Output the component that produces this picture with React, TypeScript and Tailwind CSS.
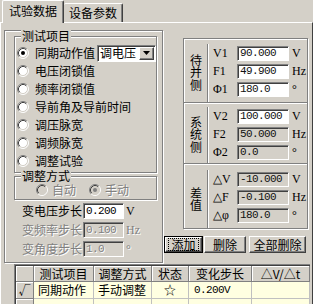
import React from 'react';

const etched = 'border border-[#808080] shadow-[inset_1px_1px_0_#ffffff,1px_1px_0_#ffffff]';
const sunken =
  'border border-t-[#808080] border-l-[#808080] border-b-white border-r-white shadow-[inset_1px_1px_0_#404040]';
const raised =
  'border border-t-white border-l-white border-b-[#404040] border-r-[#404040] shadow-[inset_-1px_-1px_0_#808080]';
const mono = "font-['Liberation_Mono',monospace] text-[11px] tracking-[-0.6px]";
const serif = "font-['Liberation_Serif',serif]";
const grayText = 'text-[#808080] [text-shadow:1px_1px_0_#ffffff]';

function Radio({ checked = false, disabled = false }: { checked?: boolean; disabled?: boolean }) {
  return (
    <svg width="12" height="12" viewBox="0 0 12 12" className="shrink-0">
      <circle cx="6" cy="6" r="5" fill={disabled ? '#d4d0c8' : '#ffffff'} />
      <path d="M2.11 9.89A5.5 5.5 0 0 1 9.89 2.11" fill="none" stroke="#808080" />
      <path d="M9.89 2.11A5.5 5.5 0 0 1 2.11 9.89" fill="none" stroke="#ffffff" />
      <path d="M2.82 9.18A4.5 4.5 0 0 1 9.18 2.82" fill="none" stroke="#404040" />
      <path d="M9.18 2.82A4.5 4.5 0 0 1 2.82 9.18" fill="none" stroke="#d4d0c8" />
      {checked && <circle cx="6" cy="6" r="2" fill={disabled ? '#808080' : '#000000'} />}
    </svg>
  );
}

const items = ['同期动作值', '电压闭锁值', '频率闭锁值', '导前角及导前时间', '调压脉宽', '调频脉宽', '调整试验'];

function StepRow({ label, value, unit, disabled = false }: { label: string; value: string; unit: string; disabled?: boolean }) {
  return (
    <div className="flex h-[16px] items-center pl-[8px]">
      <span className={`w-[61px] ${disabled ? grayText : ''}`}>{label}</span>
      <div className={`flex h-[16px] w-[41px] items-center pl-[2px] ${sunken} ${disabled ? 'bg-[#d4d0c8]' : 'bg-white'}`}>
        <span className={`${mono} ${disabled ? grayText : ''}`}>{value}</span>
      </div>
      <span className={`ml-[2px] ${serif} ${disabled ? grayText : ''}`}>{unit}</span>
    </div>
  );
}

function LeftPanel() {
  return (
    <div className={`ml-[3px] h-[233px] w-[159px] shrink-0 pl-[9px] pt-[5px] ${etched}`}>
      <div className={`flex h-[137px] w-[143px] flex-col ${etched}`}>
        <div className="-mt-[7px] ml-[6px] w-fit bg-[#d4d0c8] px-[1px] leading-[12px]">测试项目</div>
        <div className="mt-[2px] flex flex-col pl-[2px]">
          {items.map((t, i) => (
            <div key={t} className="flex h-[18px] items-center">
              <Radio checked={i === 0} />
              <span className="ml-[6px]">{t}</span>
              {i === 0 && (
                <div className={`ml-auto flex h-[17px] w-[59px] items-center bg-white pl-[2px] ${sunken}`}>
                  <span>调电压</span>
                  <div className={`ml-auto mr-px flex h-[13px] w-[15px] items-center justify-center bg-[#d4d0c8] ${raised}`}>
                    <svg width="7" height="4" viewBox="0 0 7 4">
                      <path d="M0 0h7L3.5 4z" fill="#000" />
                    </svg>
                  </div>
                </div>
              )}
            </div>
          ))}
        </div>
      </div>
      <div className={`mt-[3px] flex h-[24px] w-[143px] flex-col ${etched}`}>
        <div className="-mt-[7px] ml-[6px] w-fit bg-[#d4d0c8] px-[1px] leading-[12px]">调整方式</div>
        <div className="mt-px flex h-[14px] items-center pl-[21px]">
          <Radio disabled />
          <span className={`ml-[4px] ${grayText}`}>自动</span>
          <span className="ml-[13px]" />
          <Radio disabled checked />
          <span className={`ml-[4px] ${grayText}`}>手动</span>
        </div>
      </div>
      <div className="mt-[3px] flex flex-col gap-[3px]">
        <StepRow label="变电压步长" value="0.200" unit="V" />
        <StepRow label="变频率步长" value="0.100" unit="Hz" disabled />
        <StepRow label="变角度步长" value="1.0" unit="°" disabled />
      </div>
    </div>
  );
}

type Row = { label: string; value: string; unit: string; gray?: boolean };

function Section({ title, rows, className }: { title: string; rows: Row[]; className: string }) {
  return (
    <div className={`flex ${className}`}>
      <div className="flex w-[24px] shrink-0 items-center justify-center border-r border-r-[#808080] shadow-[1px_0_0_#ffffff]">
        <span className="leading-[12px] tracking-[0.5px] [writing-mode:vertical-rl]">{title}</span>
      </div>
      <div className="flex flex-col pl-[5px]">
        {rows.map((r) => (
          <div key={r.label} className="flex h-[18px] items-center">
            <span className={`w-[24px] ${serif}`}>{r.label}</span>
            <div className={`flex h-[15px] w-[52px] items-center pl-[2px] ${sunken} ${r.gray ? 'bg-[#d4d0c8]' : 'bg-white'}`}>
              <span className={`${mono} text-[#101010]`}>{r.value}</span>
            </div>
            <span className={`ml-[3px] ${serif}`}>{r.unit}</span>
          </div>
        ))}
      </div>
    </div>
  );
}

function RightColumn() {
  return (
    <div className="flex flex-col">
      <div className={`ml-[20px] mt-[8px] flex h-[191px] w-[125px] flex-col ${etched}`}>
        <Section
          title="待并侧"
          className="h-[63px] pt-[5px]"
          rows={[
            { label: 'V1', value: '90.000', unit: 'V' },
            { label: 'F1', value: '49.900', unit: 'Hz' },
            { label: 'Φ1', value: '180.0', unit: '°' },
          ]}
        />
        <Section
          title="系统侧"
          className="h-[61px] border-t border-t-[#808080] pt-[4px] shadow-[inset_0_1px_0_#ffffff]"
          rows={[
            { label: 'V2', value: '100.000', unit: 'V' },
            { label: 'F2', value: '50.000', unit: 'Hz', gray: true },
            { label: 'Φ2', value: '0.0', unit: '°', gray: true },
          ]}
        />
        <Section
          title="差值"
          className="h-[65px] border-t border-t-[#808080] pt-[6px] shadow-[inset_0_1px_0_#ffffff]"
          rows={[
            { label: '△V', value: '-10.000', unit: 'V', gray: true },
            { label: '△F', value: '-0.100', unit: 'Hz', gray: true },
            { label: '△φ', value: '180.0', unit: '°', gray: true },
          ]}
        />
      </div>
      <div className="ml-px mt-[7px] flex">
        <div className="h-[17px] w-[39px] border border-black">
          <div className={`flex h-full w-full items-center justify-center ${raised}`}>
            <span className="border border-dotted border-black px-[2px] leading-[11px]">添加</span>
          </div>
        </div>
        <div className={`ml-px flex h-[17px] w-[42px] items-center justify-center ${raised}`}>删除</div>
        <div className={`ml-[3px] flex h-[17px] w-[57px] items-center justify-center ${raised}`}>全部删除</div>
      </div>
    </div>
  );
}

const head = 'flex h-[16px] items-center justify-center border-r border-b border-r-[#808080] border-b-[#808080] bg-[#d4d0c8] shadow-[inset_1px_1px_0_#ffffff]';
const cell = 'flex h-[17px] items-center border-r border-b border-r-[#c0c0c0] border-b-[#c0c0c0] bg-[#ffffe1]';
const fixedCell = 'flex h-[17px] items-center justify-center border-r border-b border-r-[#808080] border-b-[#808080] bg-[#d4d0c8] shadow-[inset_1px_1px_0_#ffffff]';

function Grid() {
  const cols = ['', '测试项目', '调整方式', '状态', '变化步长', '△V/△t'];
  return (
    <div className="ml-[13px] mt-px w-[296px] border-l border-t border-l-[#808080] border-t-[#808080] shadow-[inset_1px_1px_0_#404040]">
      <div className="grid grid-cols-[18px_60px_58px_37px_63px_58px] pl-px pt-px">
        {cols.map((c, i) => (
          <div key={i} className={head}>
            {c}
          </div>
        ))}
        <div className={fixedCell}>√</div>
        <div className={`${cell} pl-[4px]`}>同期动作</div>
        <div className={`${cell} pl-[4px]`}>手动调整</div>
        <div className={`${cell} justify-center`}>☆</div>
        <div className={`${cell} pl-[5px]`}>
          <span className={mono}>0.200V</span>
        </div>
        <div className={cell} />
        <div className={fixedCell} />
        <div className={cell} />
        <div className={cell} />
        <div className={cell} />
        <div className={cell} />
        <div className={cell} />
      </div>
    </div>
  );
}

export default function App() {
  return (
    <div className="h-[304px] w-[313px] overflow-hidden bg-[#d4d0c8] text-[12px] leading-[14px] text-black font-['Noto_Sans_CJK_SC',sans-serif]">
      <div className="-mb-px flex h-[23px] items-end pl-[2px]">
        <div className="relative z-10 flex h-[23px] w-[62px] items-center justify-center rounded-t-[2px] border-l border-r border-t border-l-white border-r-[#404040] border-t-white bg-[#d4d0c8] pb-[2px] shadow-[inset_-1px_0_0_#808080]">
          试验数据
        </div>
        <div className="mb-px flex h-[19px] w-[59px] items-center justify-center rounded-t-[2px] border-r border-t border-r-[#404040] border-t-white shadow-[inset_-1px_0_0_#808080]">
          设备参数
        </div>
      </div>
      <div className="h-[282px] border-l border-r border-t border-l-white border-r-[#404040] border-t-white">
        <div className="flex pt-[7px]">
          <LeftPanel />
          <RightColumn />
        </div>
        <Grid />
      </div>
    </div>
  );
}
